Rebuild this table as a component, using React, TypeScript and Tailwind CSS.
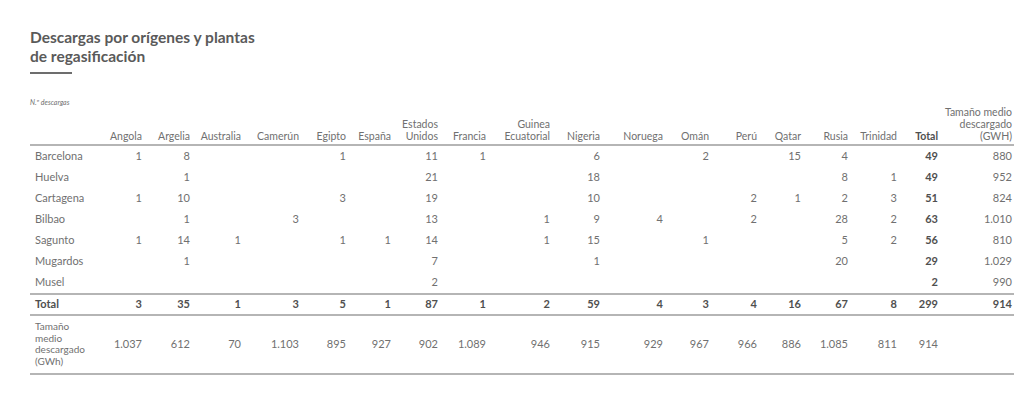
const cols = "grid grid-cols-[70px_44px_48px_51px_58px_47px_45px_47px_48px_64px_50px_63px_46px_48px_44px_47px_49px_41px_74px]";

const headers: string[][] = [
  ["Angola"],
  ["Argelia"],
  ["Australia"],
  ["Camerún"],
  ["Egipto"],
  ["España"],
  ["Estados", "Unidos"],
  ["Francia"],
  ["Guinea", "Ecuatorial"],
  ["Nigeria"],
  ["Noruega"],
  ["Omán"],
  ["Perú"],
  ["Qatar"],
  ["Rusia"],
  ["Trinidad"],
  ["Total"],
  ["Tamaño medio", "descargado", "(GWH)"],
];

const rows: { name: string; values: string[] }[] = [
  { name: "Barcelona", values: ["1", "8", "", "", "1", "", "11", "1", "", "6", "", "2", "", "15", "4", "", "49", "880"] },
  { name: "Huelva", values: ["", "1", "", "", "", "", "21", "", "", "18", "", "", "", "", "8", "1", "49", "952"] },
  { name: "Cartagena", values: ["1", "10", "", "", "3", "", "19", "", "", "10", "", "", "2", "1", "2", "3", "51", "824"] },
  { name: "Bilbao", values: ["", "1", "", "3", "", "", "13", "", "1", "9", "4", "", "2", "", "28", "2", "63", "1.010"] },
  { name: "Sagunto", values: ["1", "14", "1", "", "1", "1", "14", "", "1", "15", "", "1", "", "", "5", "2", "56", "810"] },
  { name: "Mugardos", values: ["", "1", "", "", "", "", "7", "", "", "1", "", "", "", "", "20", "", "29", "1.029"] },
  { name: "Musel", values: ["", "", "", "", "", "", "2", "", "", "", "", "", "", "", "", "", "2", "990"] },
];

const totals = ["3", "35", "1", "3", "5", "1", "87", "1", "2", "59", "4", "3", "4", "16", "67", "8", "299", "914"];
const averages = ["1.037", "612", "70", "1.103", "895", "927", "902", "1.089", "946", "915", "929", "967", "966", "886", "1.085", "811", "914", ""];

export default function App() {
  return (
    <div className="h-[398px] w-[1024px] bg-white font-[Lato,sans-serif] text-[#707070]">
      <div className="pl-[30px] pr-[10px] pt-[28px]">
        <h1 className="text-[15.5px] font-bold leading-[19px] text-[#5a5a5a]">
          Descargas por orígenes y plantas
          <br />
          de regasificación
        </h1>
        <div className="mt-[6px] h-[2px] w-[42px] bg-[#6d6d6d]" />
        <p className="mt-[24px] text-[7px] leading-[8px] italic">N.º descargas</p>

        <div className={`${cols} items-end border-b-2 border-[#b5b5b5] pb-[2px] text-[10.5px] leading-[12px]`}>
          <div />
          {headers.map((h, i) => (
            <div key={i} className={`pr-[2px] text-right ${i === 16 ? "font-bold text-[#4f4f4f]" : ""}`}>
              {h.map((line, j) => (
                <div key={j}>{line}</div>
              ))}
            </div>
          ))}
        </div>

        <div className="border-b-2 border-[#b5b5b5] text-[11px]">
          {rows.map((r) => (
            <div key={r.name} className={`${cols} h-[21px] items-center`}>
              <div className="pl-[5px]">{r.name}</div>
              {r.values.map((v, i) => (
                <div key={i} className={`pr-[2px] text-right ${i === 16 ? "font-bold text-[#4f4f4f]" : ""}`}>
                  {v}
                </div>
              ))}
            </div>
          ))}
        </div>

        <div className={`${cols} h-[21px] items-center border-b-2 border-[#b5b5b5] text-[11px] font-bold text-[#4f4f4f]`}>
          <div className="pl-[5px]">Total</div>
          {totals.map((v, i) => (
            <div key={i} className="pr-[2px] text-right">
              {v}
            </div>
          ))}
        </div>

        <div className={`${cols} items-center border-b-2 border-[#b5b5b5] pt-[5px] pb-[5px] text-[11px]`}>
          <div className="pl-[5px] text-[10px] leading-[11.7px]">
            Tamaño
            <br />
            medio
            <br />
            descargado
            <br />
            (GWh)
          </div>
          {averages.map((v, i) => (
            <div key={i} className="pr-[2px] text-right">
              {v}
            </div>
          ))}
        </div>
      </div>
    </div>
  );
}
